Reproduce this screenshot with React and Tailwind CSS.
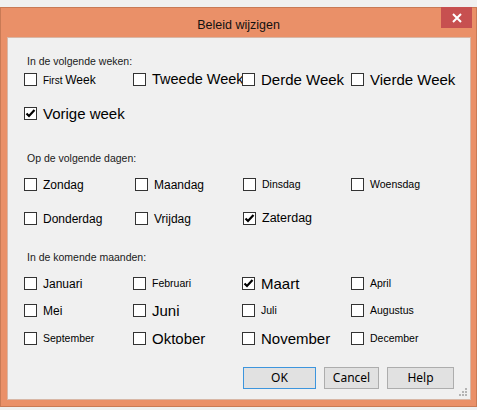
import React from "react";

const F = { fontFamily: '"Liberation Sans", Arial, sans-serif' };

function Box({ checked }) {
  return (
    <span className="relative z-10 flex h-[13px] w-[13px] shrink-0 items-center justify-center border border-[#333333] bg-white">
      {checked && (
        <svg width="11" height="11" viewBox="0 0 11 11">
          <path d="M1.5 5.5 L4 8 L9.5 2" fill="none" stroke="#000" strokeWidth="2.2" />
        </svg>
      )}
    </span>
  );
}

function Check({ label, checked, cls = "text-[12px]", w = "w-[109px]", extra = "" }) {
  return (
    <div className={`flex h-[13px] items-center gap-[6px] ${w} ${extra}`}>
      <Box checked={checked} />
      <span className={`whitespace-nowrap leading-none text-black ${cls}`}>{label}</span>
    </div>
  );
}

function Label({ children }) {
  return <div className="h-[14px] pl-[3px] text-[10.5px] leading-[14px] text-[#1a1a1a]">{children}</div>;
}

const S = "text-[10.5px]";
const L = "text-[15px]";

export default function App() {
  return (
    <div className="h-[410px] w-[477px] overflow-hidden bg-[#f0f0f0] pt-[7px]" style={F}>
      <div className="relative h-[400px] w-[477px] border border-[#c97a55] bg-[#ea9068]">
        <div className="relative h-[29px]">
          <div className="pt-[9px] text-center text-[12.5px] leading-[17px] text-[#111]">
            Beleid wijzigen
          </div>
          <div className="absolute right-[4px] top-[-1px] flex h-[21px] w-[31px] items-center justify-center bg-[#c75050]">
            <svg width="10" height="10" viewBox="0 0 10 10">
              <path d="M1 1 L9 9 M9 1 L1 9" stroke="#fff" strokeWidth="2" />
            </svg>
          </div>
        </div>
        <div className="relative ml-[6px] h-[363px] w-[464px] border border-[#d8b7a6] bg-[#f0f0f0] pl-[16px]">
          <div className="pt-[16px]">
            <Label>In de volgende weken:</Label>
          </div>
          <div className="mt-[5px] flex">
            <Check
              label={
                <>
                  <span className="text-[10px]">First </span>
                  <span className="text-[12px]">Week</span>
                </>
              }
            />
            <Check label="Tweede Week" cls="text-[14.5px]" />
            <Check label="Derde Week" cls={L} />
            <Check label="Vierde Week" cls={L} />
          </div>
          <div className="mt-[21px] flex">
            <Check label="Vorige week" checked cls={L} />
          </div>

          <div className="mt-[31px]">
            <Label>Op de volgende dagen:</Label>
          </div>
          <div className="mt-[13px] flex">
            <Check label="Zondag" w="w-[111px]" />
            <Check label="Maandag" w="w-[108px]" />
            <Check label="Dinsdag" cls={S} w="w-[108px]" />
            <Check label="Woensdag" cls={S} />
          </div>
          <div className="mt-[21px] flex">
            <Check label="Donderdag" w="w-[111px]" />
            <Check label="Vrijdag" w="w-[108px]" />
            <Check label="Zaterdag" checked cls="text-[12.5px]" w="w-[108px]" />
          </div>

          <div className="mt-[25px]">
            <Label>In de komende maanden:</Label>
          </div>
          <div className="mt-[13px] flex">
            <Check label="Januari" />
            <Check label="Februari" cls={S} />
            <Check label="Maart" checked cls={L} />
            <Check label="April" cls={S} />
          </div>
          <div className="mt-[14px] flex">
            <Check label="Mei" />
            <Check label="Juni" cls={L} />
            <Check label="Juli" cls={S} />
            <Check label="Augustus" cls={S} />
          </div>
          <div className="mt-[15px] flex">
            <Check label="September" cls={S} />
            <Check label="Oktober" cls={L} />
            <Check label="November" cls={L} />
            <Check label="December" cls={S} />
          </div>

          <div
            className="mt-[22px] flex justify-end gap-[8px] pr-[16px] text-[12px] text-black"
            style={{ fontFamily: '"Noto Sans", "Open Sans", sans-serif' }}
          >
            <button className="flex h-[22px] w-[73px] items-center justify-center border border-[#3d95dd] bg-[#e1e1e1]">OK</button>
            <button className="flex h-[22px] w-[55px] items-center justify-center border border-[#adadad] bg-[#e1e1e1]">Cancel</button>
            <button className="flex h-[22px] w-[67px] items-center justify-center border border-[#adadad] bg-[#e1e1e1]">Help</button>
          </div>

          <svg className="absolute bottom-[2px] right-[2px]" width="9" height="9" viewBox="0 0 9 9">
            <g fill="#b4b4b4">
              <rect x="6" y="0" width="2" height="2" />
              <rect x="3" y="3" width="2" height="2" />
              <rect x="6" y="3" width="2" height="2" />
              <rect x="0" y="6" width="2" height="2" />
              <rect x="3" y="6" width="2" height="2" />
              <rect x="6" y="6" width="2" height="2" />
            </g>
          </svg>
        </div>
      </div>
    </div>
  );
}
